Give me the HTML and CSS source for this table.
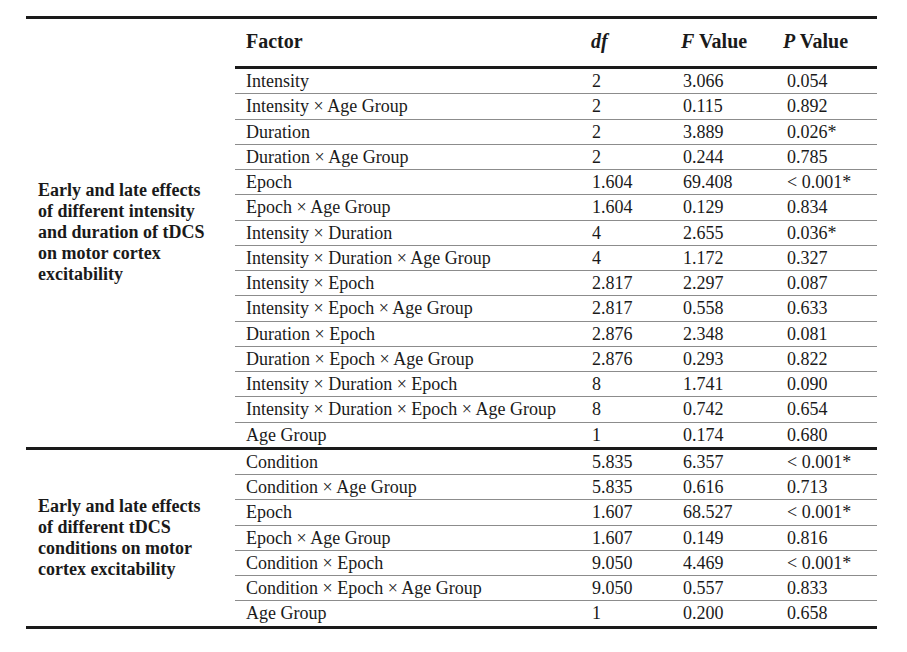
FILE: index.html
```html
<!DOCTYPE html>
<html>
<head>
<meta charset="utf-8">
<link rel="stylesheet" href="styles.css">
</head>
<body>
<div class="page">
<table class="anova">
  <colgroup>
    <col class="c-group"><col class="c-factor"><col class="c-df"><col class="c-f"><col class="c-p">
  </colgroup>
  <tbody class="grp first">
    <tr class="head">
      <td class="label" rowspan="16">Early and late effects<br>of different intensity<br>and duration of tDCS<br>on motor cortex<br>excitability</td>
      <th class="factor">Factor</th>
      <th class="df"><i>df</i></th>
      <th class="fv"><i>F</i> Value</th>
      <th class="pv"><i>P</i> Value</th>
    </tr>
    <tr class="firstrow"><td class="factor">Intensity</td><td class="df">2</td><td class="fv">3.066</td><td class="pv">0.054</td></tr>
    <tr><td class="factor">Intensity × Age Group</td><td class="df">2</td><td class="fv">0.115</td><td class="pv">0.892</td></tr>
    <tr><td class="factor">Duration</td><td class="df">2</td><td class="fv">3.889</td><td class="pv">0.026*</td></tr>
    <tr><td class="factor">Duration × Age Group</td><td class="df">2</td><td class="fv">0.244</td><td class="pv">0.785</td></tr>
    <tr><td class="factor">Epoch</td><td class="df">1.604</td><td class="fv">69.408</td><td class="pv">&lt; 0.001*</td></tr>
    <tr><td class="factor">Epoch × Age Group</td><td class="df">1.604</td><td class="fv">0.129</td><td class="pv">0.834</td></tr>
    <tr><td class="factor">Intensity × Duration</td><td class="df">4</td><td class="fv">2.655</td><td class="pv">0.036*</td></tr>
    <tr><td class="factor">Intensity × Duration × Age Group</td><td class="df">4</td><td class="fv">1.172</td><td class="pv">0.327</td></tr>
    <tr><td class="factor">Intensity × Epoch</td><td class="df">2.817</td><td class="fv">2.297</td><td class="pv">0.087</td></tr>
    <tr><td class="factor">Intensity × Epoch × Age Group</td><td class="df">2.817</td><td class="fv">0.558</td><td class="pv">0.633</td></tr>
    <tr><td class="factor">Duration × Epoch</td><td class="df">2.876</td><td class="fv">2.348</td><td class="pv">0.081</td></tr>
    <tr><td class="factor">Duration × Epoch × Age Group</td><td class="df">2.876</td><td class="fv">0.293</td><td class="pv">0.822</td></tr>
    <tr><td class="factor">Intensity × Duration × Epoch</td><td class="df">8</td><td class="fv">1.741</td><td class="pv">0.090</td></tr>
    <tr><td class="factor">Intensity × Duration × Epoch × Age Group</td><td class="df">8</td><td class="fv">0.742</td><td class="pv">0.654</td></tr>
    <tr class="last"><td class="factor">Age Group</td><td class="df">1</td><td class="fv">0.174</td><td class="pv">0.680</td></tr>
  </tbody>
  <tbody class="grp second">
    <tr><td class="label" rowspan="7">Early and late effects<br>of different tDCS<br>conditions on motor<br>cortex excitability</td>
      <td class="factor">Condition</td><td class="df">5.835</td><td class="fv">6.357</td><td class="pv">&lt; 0.001*</td></tr>
    <tr><td class="factor">Condition × Age Group</td><td class="df">5.835</td><td class="fv">0.616</td><td class="pv">0.713</td></tr>
    <tr><td class="factor">Epoch</td><td class="df">1.607</td><td class="fv">68.527</td><td class="pv">&lt; 0.001*</td></tr>
    <tr><td class="factor">Epoch × Age Group</td><td class="df">1.607</td><td class="fv">0.149</td><td class="pv">0.816</td></tr>
    <tr><td class="factor">Condition × Epoch</td><td class="df">9.050</td><td class="fv">4.469</td><td class="pv">&lt; 0.001*</td></tr>
    <tr><td class="factor">Condition × Epoch × Age Group</td><td class="df">9.050</td><td class="fv">0.557</td><td class="pv">0.833</td></tr>
    <tr class="last"><td class="factor">Age Group</td><td class="df">1</td><td class="fv">0.200</td><td class="pv">0.658</td></tr>
  </tbody>
</table>
</div>
</body>
</html>
```
FILE: styles.css
```css
html, body {
  margin: 0;
  padding: 0;
  background: #ffffff;
}
.page {
  padding: 16px 0 0 26px;
}
.anova {
  border-collapse: collapse;
  width: 851px;
  table-layout: fixed;
  font-family: "Liberation Serif", "Times New Roman", serif;
  font-size: 18px;
  color: #1a1a1a;
  border-top: 3px solid #1a1a1a;
  border-bottom: 3px solid #1a1a1a;
}
.c-group { width: 209px; }
.c-factor { width: 354px; }
.c-df { width: 90px; }
.c-f { width: 102px; }
.c-p { width: 96px; }

.anova td, .anova th {
  padding: 0;
  text-align: left;
  white-space: nowrap;
  line-height: 18px;
}
.anova td.label {
  font-weight: bold;
  font-size: 18px;
  padding-left: 12px;
  line-height: 21px;
  vertical-align: middle;
  white-space: nowrap;
  border-bottom: none;
}
.head th {
  font-weight: bold;
  font-size: 20px;
  height: 44px;
  padding-bottom: 3px;
  border-bottom: 3px solid #1a1a1a;
  vertical-align: middle;
}
.head th.factor { padding-left: 11px; }
.head th.df { padding-left: 2px; }
.head th.fv { padding-left: 2px; }
.head th.pv { padding-left: 2px; }

tr:not(.head) td:not(.label) {
  height: 24.25px;
  border-bottom: 1px solid #8c8c8c;
  vertical-align: middle;
}
tr.last td:not(.label) {
  border-bottom: none;
}
td.factor { padding-left: 11px; }
td.df { padding-left: 3px; }
td.fv { padding-left: 4px; }
td.pv { padding-left: 6px; }

.grp.first {
  border-bottom: 3px solid #1a1a1a;
}
```
